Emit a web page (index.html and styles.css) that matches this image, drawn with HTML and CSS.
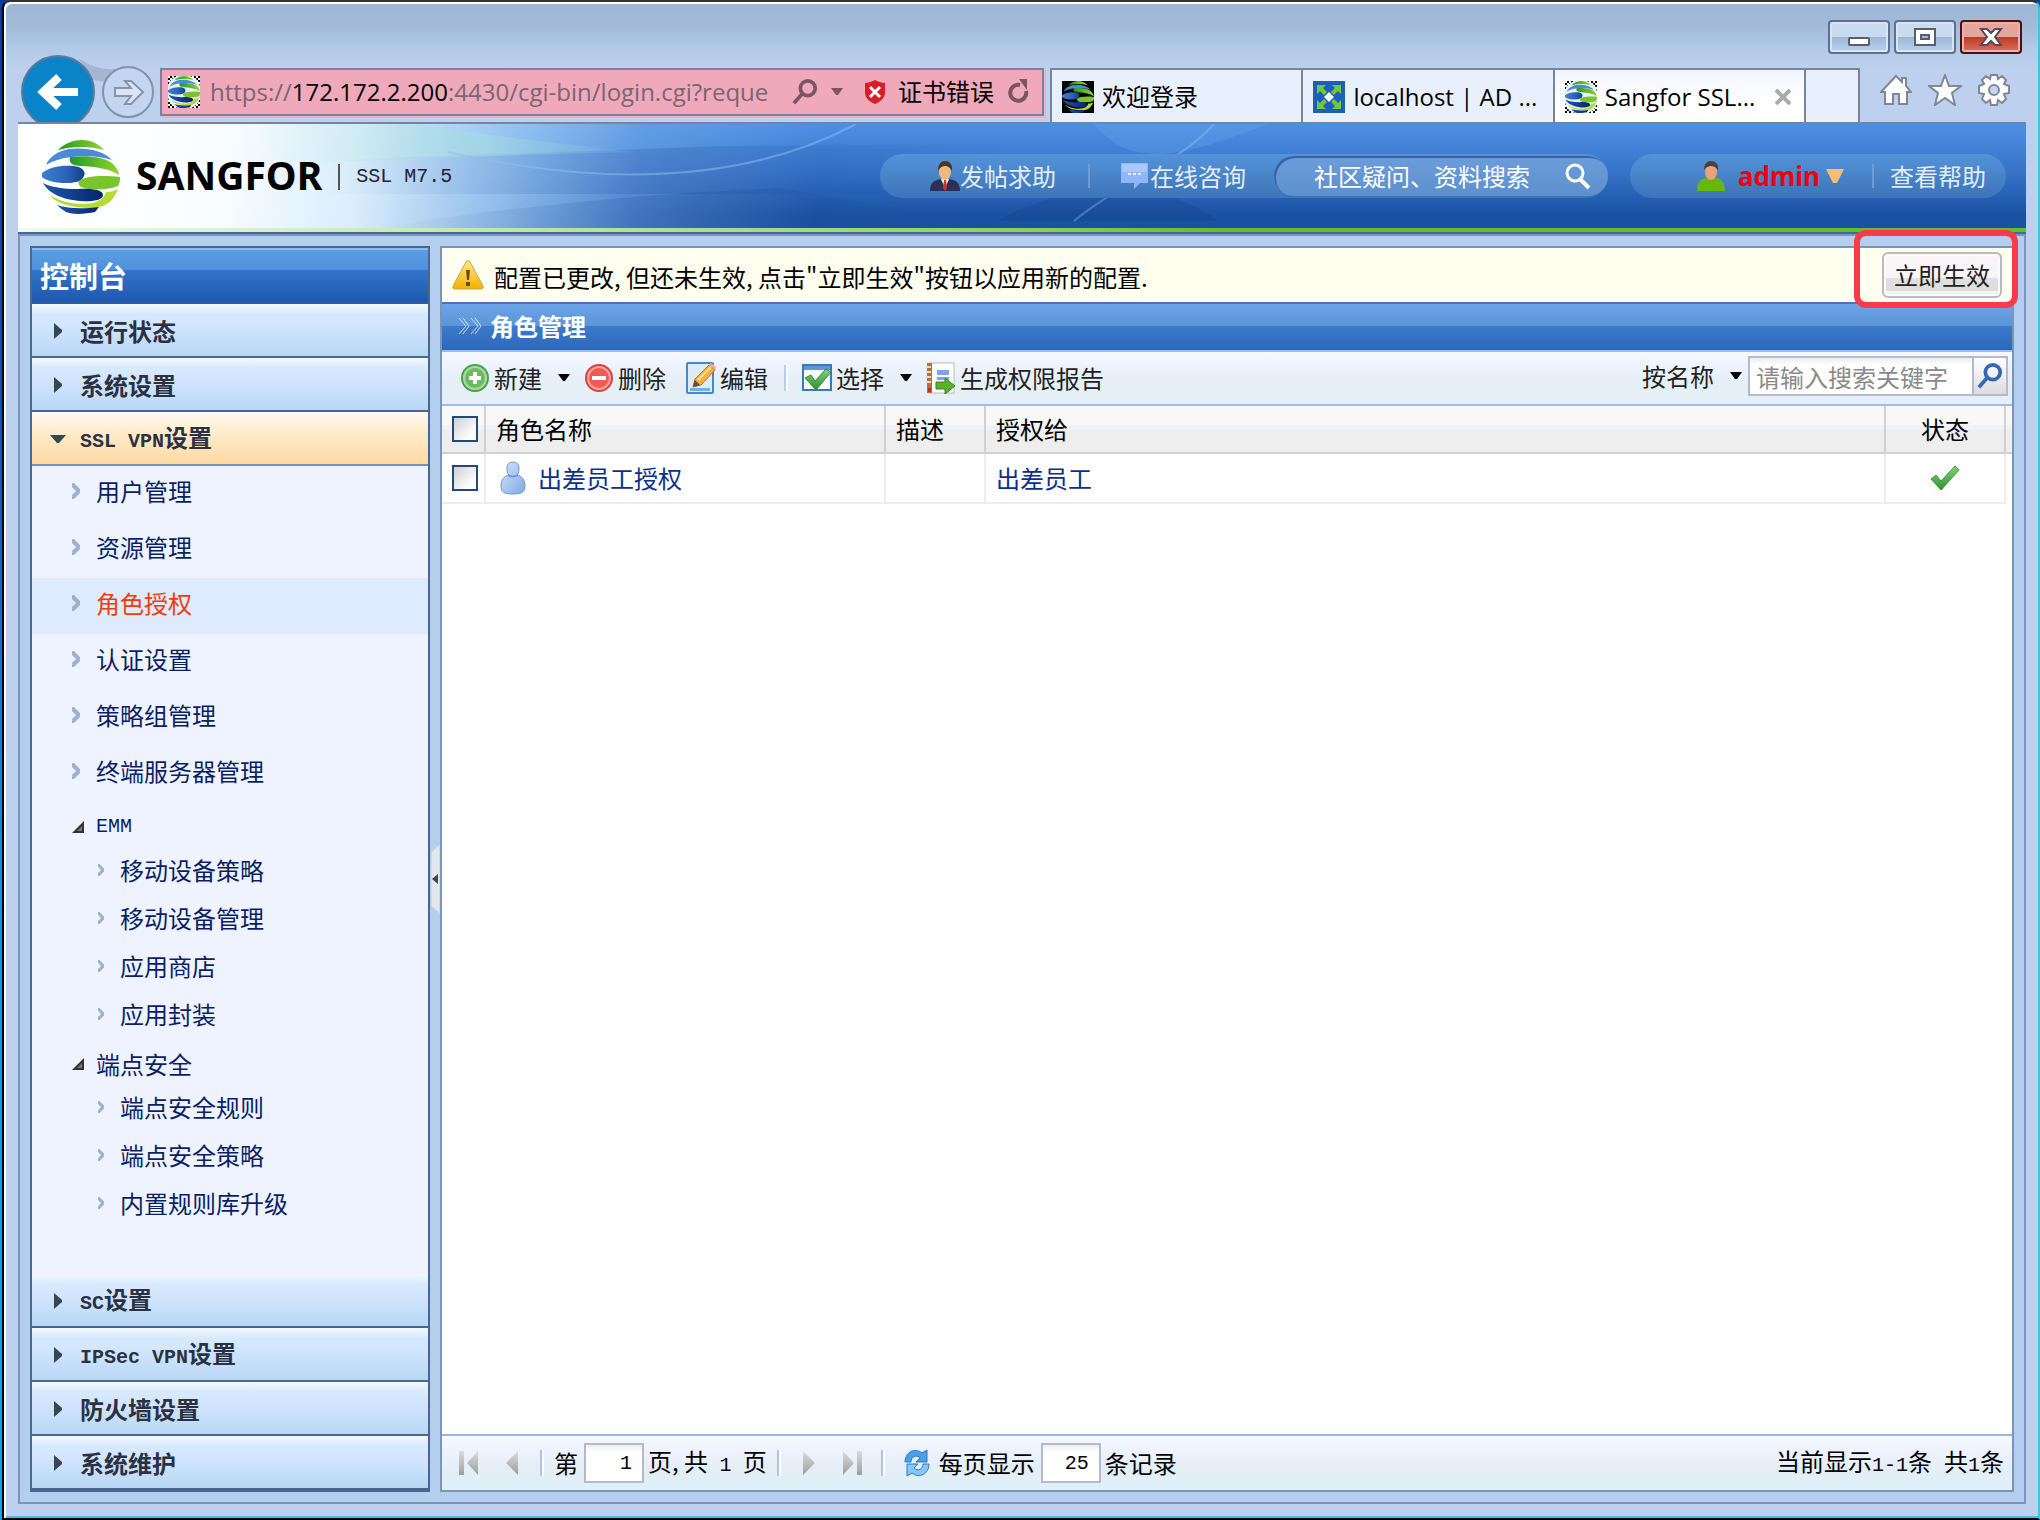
FILE: index.html
```html
<!DOCTYPE html>
<html lang="zh-CN">
<head>
<meta charset="utf-8">
<title>Sangfor SSL VPN</title>
<link rel="stylesheet" href="styles.css">
</head>
<body>
<svg class="defs" aria-hidden="true">
  <defs>
    <linearGradient id="gBlue" x1="0" y1="0" x2="1" y2="0"><stop offset="0" stop-color="#3f7fd0"/><stop offset=".6" stop-color="#2a62b4"/><stop offset="1" stop-color="#123f8c"/></linearGradient>
    <linearGradient id="gNavy" x1="0" y1="0" x2="1" y2="0"><stop offset="0" stop-color="#1f57ab"/><stop offset="1" stop-color="#06256a"/></linearGradient>
    <linearGradient id="gGreen" x1="0" y1="0" x2="1" y2="0"><stop offset="0" stop-color="#1c9a2c"/><stop offset="1" stop-color="#96d22c"/></linearGradient>
    <linearGradient id="gGrey" x1="0" y1="0" x2="0" y2="1"><stop offset="0" stop-color="#dcdcdc"/><stop offset="1" stop-color="#9c9ea2"/></linearGradient>
    <linearGradient id="gWarn" x1="0" y1="0" x2="0" y2="1"><stop offset="0" stop-color="#ffe98a"/><stop offset="1" stop-color="#f3b000"/></linearGradient>
    <linearGradient id="gUser" x1="0" y1="0" x2="1" y2="1"><stop offset="0" stop-color="#d6e6fb"/><stop offset="1" stop-color="#7ea9e6"/></linearGradient>
    <linearGradient id="gCheck" x1="0" y1="0" x2="0" y2="1"><stop offset="0" stop-color="#86d07c"/><stop offset="1" stop-color="#2f9230"/></linearGradient>
    <linearGradient id="gTeal" x1="0" y1="0" x2="1" y2="0"><stop offset="0" stop-color="#a5e0d8" stop-opacity="0"/><stop offset=".6" stop-color="#a5e0d8" stop-opacity=".5"/><stop offset="1" stop-color="#7cb8e8" stop-opacity=".2"/></linearGradient>
    <linearGradient id="gDeep" x1="0" y1="0" x2="1" y2="0"><stop offset="0" stop-color="#123f8c" stop-opacity="0"/><stop offset=".5" stop-color="#123f8c" stop-opacity=".2"/><stop offset="1" stop-color="#123f8c" stop-opacity="0"/></linearGradient>
    <symbol id="globe" viewBox="0 0 78 74">
      <path d="M16 10C23 3 32 0 40 0c9 0 17 4 22 10C48 6 30 6 16 10z" fill="url(#gGreen)"/>
      <path d="M4 25C7 17 16 11 27 9c15-2 34 1 43 11-13-4-28-5-40-3-10 1-20 4-26 8z" fill="#4a8ad8"/>
      <path d="M28 17c18-2 34 0 42 6 4 4 7 8 7 12-9-6-21-8-36-9-9 0-15-2-13-9z" fill="url(#gGreen)"/>
      <path d="M0 33c8-6 18-8 32-7 8 1 12 5 10 10-2 5-8 7-17 7-11 0-20-2-25-6z" fill="url(#gBlue)"/>
      <path d="M37 41c6-5 22-6 41-4 0 3 0 6-2 9-7 3-18 4-29 3-8-1-12-4-10-8z" fill="#79c52b"/>
      <path d="M1 43c8 4 20 6 34 6 16-1 26 1 26 6 0 5-10 7-22 6C21 60 6 53 1 43z" fill="url(#gNavy)"/>
      <path d="M64 52c5 0 9-1 12-3-3 8-8 14-15 17-10 3-22 2-32 0C18 64 10 59 8 55c9 6 21 9 33 9 12 0 21-4 23-12z" fill="#b5da33"/>
      <path d="M15 65c12 4 26 4 42 2l-4 5c-9 2-22 3-29 0-3-2-6-4-9-7z" fill="url(#gNavy)"/>
    </symbol>
    <symbol id="caret" viewBox="0 0 12 8"><path d="M0 0h12L7 7H5z" fill="currentColor"/></symbol>
    <symbol id="tri" viewBox="0 0 8 16"><path d="M0 0l8 7v2l-8 7z" fill="currentColor"/></symbol>
    <symbol id="chev" viewBox="0 0 8 16"><path d="M0 0h2l6 6v4l-6 6H0v-4l4-4-4-4z" fill="currentColor"/></symbol>
    <symbol id="fold" viewBox="0 0 12 12"><path d="M12 0v12H0z" fill="#333"/><path d="M10 5v5H5z" fill="#777"/></symbol>
    <symbol id="lens" viewBox="0 0 28 28"><circle cx="17" cy="10" r="8" fill="none" stroke="currentColor" stroke-width="4"/><path d="M11 16L2 26" stroke="currentColor" stroke-width="4"/></symbol>
    <symbol id="next" viewBox="0 0 12 24"><path d="M0 0l12 12L0 24z" fill="url(#gGrey)"/></symbol>
    <symbol id="last" viewBox="0 0 20 24"><path d="M0 0l11 12L0 24z" fill="url(#gGrey)"/><path d="M14 0h5v24h-5z" fill="url(#gGrey)"/></symbol>
  </defs>
</svg>

<div class="desktop">
<div class="window">
  <div class="titlebar">
    <button class="winbtn" aria-label="最小化"><svg width="24" height="24" viewBox="0 0 24 24"><rect x="2" y="13" width="20" height="7" rx="1" fill="#fff" stroke="#555f70" stroke-width="2"/></svg></button>
    <button class="winbtn" aria-label="最大化"><svg width="24" height="24" viewBox="0 0 24 24"><path d="M2 4h20v16H2z" fill="#fff" stroke="#555f70" stroke-width="2"/><path d="M8 10h8v4H8z" fill="#9fb9d8" stroke="#555f70" stroke-width="2"/></svg></button>
    <button class="winbtn close" aria-label="关闭"><svg width="24" height="24" viewBox="0 0 24 24"><path d="M2 4h6l4 4 4-4h6l-6 8 6 8h-6l-4-4-4 4H2l6-8z" fill="#fff" stroke="#5a4a55" stroke-width="2"/></svg></button>
  </div>

  <div class="navbar">
    <div class="history">
      <svg width="142" height="68" viewBox="0 0 142 68">
        <path d="M60 4c12 8 24 12 38 11L88 28 74 26z" fill="#a3b6d2"/>
        <circle cx="40" cy="38" r="36" fill="#0a84c8" stroke="#5d7a98" stroke-width="2"/>
        <path d="M60 38H28M41 23L25 38l16 15" fill="none" stroke="#fff" stroke-width="8"/>
        <circle cx="110" cy="38" r="25" fill="#c3d5f0" stroke="#8392a8" stroke-width="2"/>
        <path d="M97 34h16l-6-7h6l12 11-12 12h-6l6-8H97z" fill="#d9e5f6" stroke="#8794a8" stroke-width="2"/>
      </svg>
    </div>
    <div class="address">
      <span class="favicon checker"><svg width="32" height="32" viewBox="0 0 78 74" preserveAspectRatio="none"><use href="#globe" width="78" height="74"/></svg></span>
      <span class="url">https://<b>172.172.2.200</b>:4430/cgi-bin/login.cgi?reque</span>
      <svg class="dim" width="26" height="26"><use href="#lens"/></svg>
      <svg class="dim addr-caret" width="14" height="8"><use href="#caret"/></svg>
      <svg width="22" height="24" viewBox="0 0 22 24"><path d="M11 0c4 2 7 3 10 3v10c0 5-5 9-10 11C6 22 1 18 1 13V3c3 0 6-1 10-3z" fill="#d81f26"/><path d="M6 7l10 10M16 7L6 17" stroke="#fff" stroke-width="3"/></svg>
      <span class="cert">证书错误</span>
      <svg class="dim" width="22" height="26" viewBox="0 0 22 26"><path d="M18 12a8 8 0 1 1-6-6" fill="none" stroke="currentColor" stroke-width="4"/><path d="M11 0h8v11z" fill="currentColor"/></svg>
    </div>
    <div class="tabs">
      <div class="tab"><span class="favicon dark"><svg width="32" height="32" viewBox="0 0 78 74" preserveAspectRatio="none"><use href="#globe" width="78" height="74"/></svg></span><span>欢迎登录</span></div>
      <div class="tab"><span class="favicon"><svg width="32" height="32" viewBox="0 0 32 32"><rect width="32" height="32" fill="#1c5fb8"/><g fill="#74c63a"><path d="M4 4h9l-3 3 4 4-3 3-4-4-3 3zM28 4v9l-3-3-4 4-3-3 4-4-3-3zM4 28v-9l3 3 4-4 3 3-4 4 3 3zM28 28h-9l3-3-4-4 3-3 4 4 3-3z"/></g><path d="M16 11l5 5-5 5-5-5z" fill="#fff"/></svg></span><span>localhost | AD ...</span></div>
      <div class="tab active"><span class="favicon checker"><svg width="32" height="32" viewBox="0 0 78 74" preserveAspectRatio="none"><use href="#globe" width="78" height="74"/></svg></span><span class="tabname">Sangfor SSL...</span><svg width="18" height="16" viewBox="0 0 18 16"><path d="M2 1l14 14M16 1L2 15" stroke="#aaa" stroke-width="4"/></svg></div>
      <div class="tab blank"></div>
    </div>
    <div class="tools">
      <svg width="32" height="32" viewBox="0 0 32 32"><path d="M16 2l6 6V4h4v8l5 6h-4v12h-8V20h-6v10H5V18H1z" fill="#fff" stroke="#7d8796" stroke-width="2"/></svg>
      <svg width="34" height="32" viewBox="0 0 34 32"><path d="M17 1l4 11h12l-9 7 3 12-10-7-10 7 3-12-9-7h12z" fill="#fff" stroke="#7d8796" stroke-width="2"/></svg>
      <svg width="32" height="32" viewBox="0 0 32 32"><path d="M13 1h6l1 4 4-3 4 4-2 4 5 2v7l-5 1 2 5-4 4-4-3-1 5h-6l-1-5-4 3-4-4 2-5-5-1v-7l5-2-2-4 4-4 4 3z" fill="#fff" stroke="#7d8796" stroke-width="2"/><circle cx="16" cy="16" r="5" fill="#c3d5f0" stroke="#7d8796" stroke-width="2"/></svg>
    </div>
  </div>

  <header class="banner">
    <svg class="swoosh" viewBox="0 0 2008 104" preserveAspectRatio="none" aria-hidden="true">
      <path d="M360 104C480 84 620 70 760 64L1000 104z" fill="url(#gDeep)"/>
      <path d="M300 38C420 30 520 30 700 22L1000 20V70H300z" fill="url(#gDeep)"/>
      <path d="M240 0h160C460 10 540 20 620 28 500 30 380 36 260 40z" fill="url(#gTeal)"/>
      <path d="M430 28Q680 84 838 0" fill="none" stroke="#8cc0f4" stroke-width="2" opacity=".5"/>
      <path d="M1056 97C1100 60 1160 40 1196 0" fill="none" stroke="#8cc0f4" stroke-width="2" opacity=".5"/>
      <path d="M980 97C1040 60 1140 50 1200 97z" fill="#0d357c" opacity=".2"/>
      <path d="M1076 0C1110 40 1150 40 1250 0z" fill="#6eb0f8" opacity=".25"/>
    </svg>
    <div class="brand">
      <svg width="78" height="74"><use href="#globe"/></svg>
      <strong>SANGFOR</strong><i></i><span class="mono">SSL M7.5</span>
    </div>
    <div class="pill left">
      <a href="#"><svg width="30" height="30" viewBox="0 0 30 30"><path d="M0 30c0-9 5-11 11-12h8c6 1 11 3 11 12z" fill="#2c2f58"/><path d="M11 18h8l-4 9z" fill="#fff"/><path d="M14 19h2l1 8-2 3-2-3z" fill="#d0342c"/><ellipse cx="15" cy="11" rx="6" ry="8" fill="#f0b880"/><path d="M8 10c0-7 3-10 7-10s8 3 7 10c-2-4-5-5-7-5s-5 1-7 5z" fill="#4a3428"/></svg>发帖求助</a>
      <i></i>
      <a href="#"><svg width="30" height="28" viewBox="0 0 30 28"><path d="M1 1h27v20h-8l-6 6v-6H1z" fill="#8fb6f8"/><path d="M2 2h25v8H2z" fill="#a9c9fc"/><path d="M8 12h3m2 0h3m2 0h3" stroke="#e8f0ff" stroke-width="2"/></svg>在线咨询</a>
      <a href="#" class="search-pill">社区疑问、资料搜索<svg width="28" height="28" viewBox="0 0 28 28"><circle cx="11" cy="11" r="8" fill="none" stroke="#fff" stroke-width="3"/><path d="M16 17l9 9" stroke="#fff" stroke-width="4"/></svg></a>
    </div>
    <div class="pill right">
      <a href="#" class="admin"><svg width="30" height="30" viewBox="0 0 30 30"><path d="M1 30c0-9 4-13 10-13h8c6 0 10 4 10 13z" fill="#68b80c"/><ellipse cx="15" cy="11" rx="6" ry="8" fill="#eaa27a"/><path d="M8 9c0-6 3-9 7-9s8 3 7 9c-2-3-5-4-7-4s-5 1-7 4z" fill="#4d4038"/></svg><b>admin</b><svg width="18" height="14" viewBox="0 0 18 14"><path d="M0 0h18L11 14H7z" fill="#f7bd77"/></svg></a>
      <i></i>
      <a href="#">查看帮助</a>
    </div>
  </header>

  <div class="workspace">
    <nav class="sidebar">
      <h2>控制台</h2>
      <button class="group"><svg width="8" height="16"><use href="#tri"/></svg>运行状态</button>
      <button class="group"><svg width="8" height="16"><use href="#tri"/></svg>系统设置</button>
      <button class="group open"><svg class="down" width="16" height="8" viewBox="0 0 16 8"><path d="M0 0h16L9 8H7z" fill="currentColor"/></svg><span><span class="mono">SSL VPN</span>设置</span></button>
      <div class="submenu">
        <a href="#"><svg width="8" height="16"><use href="#chev"/></svg>用户管理</a>
        <a href="#"><svg width="8" height="16"><use href="#chev"/></svg>资源管理</a>
        <a href="#" class="current"><svg width="8" height="16"><use href="#chev"/></svg>角色授权</a>
        <a href="#"><svg width="8" height="16"><use href="#chev"/></svg>认证设置</a>
        <a href="#"><svg width="8" height="16"><use href="#chev"/></svg>策略组管理</a>
        <a href="#"><svg width="8" height="16"><use href="#chev"/></svg>终端服务器管理</a>
        <a href="#" class="branch"><svg width="12" height="12"><use href="#fold"/></svg><span class="mono">EMM</span></a>
        <a href="#" class="leaf"><svg width="6" height="12"><use href="#chev"/></svg>移动设备策略</a>
        <a href="#" class="leaf"><svg width="6" height="12"><use href="#chev"/></svg>移动设备管理</a>
        <a href="#" class="leaf"><svg width="6" height="12"><use href="#chev"/></svg>应用商店</a>
        <a href="#" class="leaf"><svg width="6" height="12"><use href="#chev"/></svg>应用封装</a>
        <a href="#" class="branch"><svg width="12" height="12"><use href="#fold"/></svg>端点安全</a>
        <a href="#" class="leaf"><svg width="6" height="12"><use href="#chev"/></svg>端点安全规则</a>
        <a href="#" class="leaf"><svg width="6" height="12"><use href="#chev"/></svg>端点安全策略</a>
        <a href="#" class="leaf"><svg width="6" height="12"><use href="#chev"/></svg>内置规则库升级</a>
      </div>
      <button class="group"><svg width="8" height="16"><use href="#tri"/></svg><span><span class="mono">SC</span>设置</span></button>
      <button class="group"><svg width="8" height="16"><use href="#tri"/></svg><span><span class="mono">IPSec VPN</span>设置</span></button>
      <button class="group"><svg width="8" height="16"><use href="#tri"/></svg>防火墙设置</button>
      <button class="group"><svg width="8" height="16"><use href="#tri"/></svg>系统维护</button>
    </nav>

    <div class="splitter"><button aria-label="收起"><svg width="10" height="70" viewBox="0 0 10 70"><path d="M10 0v70L1 62V8z" fill="#e3e7ec" stroke="#c3ccd8"/><path d="M8 30v10l-6-5z" fill="#444"/></svg></button></div>

    <main class="panel">
      <div class="notice">
        <svg width="32" height="30" viewBox="0 0 32 30"><path d="M14 2q2-3 4 0l13 24q1 3-2 3H3q-3 0-2-3z" fill="url(#gWarn)" stroke="#cfa24a" stroke-width="1"/><path d="M14 10h4l-1 10h-2zM14 22h4v4h-4z" fill="#6b4a10"/></svg>
        <span class="message">配置已更改, 但还未生效, 点击"立即生效"按钮以应用新的配置.</span>
        <div class="apply"><button>立即生效</button></div>
      </div>
      <h1><svg width="24" height="18" viewBox="0 0 24 18"><path d="M1 1l7 8-7 8M5 1l6 8-6 8M13 1l7 8-7 8M17 1l6 8-6 8" fill="none" stroke="#cfe2fa" stroke-width="1"/></svg>角色管理</h1>
      <div class="toolbar">
        <button class="first"><svg width="30" height="30" viewBox="0 0 30 30"><circle cx="15" cy="15" r="13" fill="#6cba62" stroke="#4f9e4c" stroke-width="2"/><circle cx="15" cy="15" r="11" fill="none" stroke="#a7dba0" stroke-width="2"/><path d="M15 9v12M9 15h12" stroke="#fff" stroke-width="4"/></svg>新建<svg class="drop" width="12" height="8"><use href="#caret"/></svg></button>
        <button><svg width="30" height="30" viewBox="0 0 30 30"><circle cx="15" cy="15" r="13" fill="#ee5b56" stroke="#d4453f" stroke-width="2"/><circle cx="15" cy="15" r="11" fill="none" stroke="#f8a19c" stroke-width="2"/><path d="M8 15h14" stroke="#fff" stroke-width="4"/></svg>删除</button>
        <button><svg width="30" height="32" viewBox="0 0 30 32"><rect x="1" y="1" width="26" height="30" rx="1" fill="#dcecfc" stroke="#4a86c8" stroke-width="2"/><path d="M4 26h20v3H4z" fill="#6cb2ee"/><path d="M7 25l2-8L23 3l6 5-14 15z" fill="#f5b040" stroke="#b8742a" stroke-width="1"/><path d="M12 18L25 5" stroke="#fbdc90" stroke-width="2"/><path d="M7 25l2-7 5 5z" fill="#6e4a2a"/><path d="M23 3l2-2 5 4-1 3z" fill="#f3a7a0"/></svg>编辑</button>
        <i></i>
        <button class="choose"><svg width="30" height="28" viewBox="0 0 30 28"><rect x="1" y="1" width="28" height="25" fill="#fff" stroke="#3f78b8" stroke-width="2"/><path d="M2 2h26v4H2z" fill="#5e96d6"/><path d="M3 14l6-3 4 6L24 5l5 3-15 18z" fill="url(#gCheck)" stroke="#2f8a34"/></svg>选择<svg class="drop" width="12" height="8"><use href="#caret"/></svg></button>
        <button><svg width="30" height="32" viewBox="0 0 30 32"><rect x="4" y="1" width="24" height="30" fill="#fff" stroke="#b8b8b8"/><path d="M1 1h5v30H1z" fill="#b8703a"/><path d="M0 5h5M0 10h5M0 15h5M0 20h5" stroke="#f0dcc0" stroke-width="2"/><path d="M11 8h12v5H11zM11 15h12v3H11z" fill="#7ba4ec"/><path d="M10 20h9v-4l10 8-10 8v-5h-9z" fill="#5bb030" stroke="#3b7d1c"/><path d="M2 26h3v4H2z" fill="#e02020"/></svg>生成权限报告</button>
        <div class="finder">
          <button>按名称<svg class="drop" width="12" height="8"><use href="#caret"/></svg></button>
          <input type="text" aria-label="搜索" placeholder="请输入搜索关键字"><button class="go" aria-label="查找"><svg width="26" height="26"><use href="#lens"/></svg></button>
        </div>
      </div>
      <table>
        <colgroup><col class="c-check"><col class="c-name"><col class="c-desc"><col><col class="c-state"><col class="c-end"></colgroup>
        <thead><tr><th><input type="checkbox" aria-label="全选"></th><th>角色名称</th><th>描述</th><th>授权给</th><th class="mid">状态</th><th></th></tr></thead>
        <tbody><tr><td><input type="checkbox" aria-label="选择出差员工授权"></td><td><a href="#" class="role"><svg width="26" height="34" viewBox="0 0 26 34"><path d="M7 6c0-3 3-5 6-5s6 2 6 5c0 4 0 6-2 8 5 1 8 5 8 11 0 6-3 8-12 8S1 31 1 25c0-6 3-10 8-11-2-2-2-4-2-8z" fill="url(#gUser)" stroke="#6f98d4"/><path d="M8 14q5 3 10 0" fill="none" stroke="#6f98d4" stroke-width="2"/></svg>出差员工授权</a></td><td></td><td><a href="#">出差员工</a></td><td class="mid"><svg width="30" height="26" viewBox="0 0 30 26"><path d="M1 14l5-4 5 6L25 1l4 4-18 20z" fill="url(#gCheck)" stroke="#3c9a3c"/></svg></td><td></td></tr></tbody>
      </table>
      <footer class="pager">
        <button aria-label="首页"><svg class="flip" width="20" height="24"><use href="#last"/></svg></button>
        <button class="prev" aria-label="上一页"><svg class="flip" width="12" height="24"><use href="#next"/></svg></button>
        <i></i>
        <label class="page">第<input type="text" value="1"></label>
        <span class="count">页, 共 <span class="mono">1</span> 页</span>
        <i></i>
        <button class="next" aria-label="下一页"><svg width="12" height="24"><use href="#next"/></svg></button>
        <button class="end" aria-label="末页"><svg width="20" height="24"><use href="#last"/></svg></button>
        <i></i>
        <button class="reload" aria-label="刷新"><svg width="28" height="28" viewBox="0 0 28 28"><path d="M2 13C2 3 12-2 19 4l5-3v12H13l4-4C13 5 8 8 8 13z" fill="#4a9fe8" stroke="#2a78c4"/><path d="M26 15c0 10-10 15-17 9l-5 3V15h11l-4 4c4 4 9 1 9-4z" fill="#86c6f6" stroke="#2a78c4"/></svg></button>
        <label>每页显示<input type="text" value="25">条记录</label>
        <span class="total">当前显示<span class="mono">1-1</span>条<span class="mono">&nbsp;</span>共<span class="mono">1</span>条</span>
      </footer>
    </main>
  </div>
</div>
</div>
</body>
</html>
```
FILE: styles.css
```css
* { box-sizing: border-box; }
body {
  margin: 0;
  font-family: "Noto Sans CJK SC", sans-serif;
  font-size: 24px;
  line-height: 32px;
  color: #000;
}
button, input { font: inherit; color: inherit; margin: 0; }
button { background: none; border: 0; padding: 0; }
a { color: inherit; text-decoration: none; }
svg { display: block; flex: none; }
.defs { position: absolute; width: 0; height: 0; }
.mono { font-family: "Liberation Mono", monospace; font-size: 20px; }

/* browser window */
.desktop {
  min-height: 100vh;
  display: flex;
  padding-left: 2px;
  background: linear-gradient(#0a3c9c, #0a4fc0 25%, #0a96f0 60%, #0aa6f8);
}
.window {
  flex: 1;
  min-width: 0;
  display: flex;
  flex-direction: column;
  padding: 2px 12px 14px 14px;
  border: 2px solid #000;
  border-top-color: #333;
  border-right-color: #3cc4e0;
  border-radius: 8px 8px 0 0;
  background: linear-gradient(#9db6d4, #a3bad8 24px, #b2cbe8 48px, #bdd1ee 66px);
  box-shadow: inset 2px 2px 0 #fff, inset 0 -2px 0 #3cc4e0;
}
.titlebar {
  height: 64px;
  padding: 16px 4px 0 0;
  display: flex;
  justify-content: flex-end;
  gap: 4px;
}
.winbtn {
  width: 62px;
  height: 34px;
  display: flex;
  align-items: center;
  justify-content: center;
  border: 2px solid #5d7190;
  border-radius: 4px;
  background: linear-gradient(#c9d9ee 50%, #9db7d6 50%, #b9d2ee);
  box-shadow: inset 0 0 0 2px #d8e5f5;
}
.winbtn.close {
  border-color: #4a1018;
  background: linear-gradient(#e5a59c 50%, #bd3a22 50%, #d8715e);
  box-shadow: inset 0 0 0 2px #eab2aa;
}

.navbar {
  display: flex;
  height: 56px;
  border-bottom: 2px solid #76859c;
  font-family: "Open Sans", "Noto Sans CJK SC", sans-serif;
}
.history { width: 142px; margin-top: -14px; }
.address {
  flex: 0 1 884px;
  height: 48px;
  display: flex;
  align-items: center;
  padding: 0 12px 0 6px;
  border: 2px solid #77839a;
  background: #f0a9bb;
  box-shadow: 2px 2px 0 #e8b2c8;
}
.favicon { flex: none; width: 32px; height: 32px; }
.checker { background: repeating-conic-gradient(#000 0 25%, #fff 0 50%) 0 0 / 4px 4px; }
.checker svg { background: #e8f2f4; border-radius: 12px; }
.dark { background: #000; }
.url { flex: 1; min-width: 0; margin: 0 8px 0 10px; overflow: hidden; white-space: nowrap; color: #7b6570; }
.url b { font-weight: 400; color: #000; }
.dim { color: #7b5563; }
.addr-caret { margin: 0 20px 0 12px; }
.cert { margin: 0 14px 0 12px; white-space: nowrap; }
.tabs { display: flex; flex: 0 1 810px; margin-left: 6px; border-left: 2px solid #76859c; }
.tab {
  flex: 0 1 252px;
  min-width: 0;
  height: 54px;
  display: flex;
  align-items: center;
  gap: 8px;
  padding: 2px 12px 0 10px;
  border-top: 2px solid #76859c;
  border-right: 2px solid #76859c;
  background: #e8f0fd;
  white-space: nowrap;
}
.tab.active { background: linear-gradient(#f2f5ff, #fff 60%); }
.tab.blank { flex-basis: 54px; padding: 0; }
.tabname { flex: 1; }
.tools { flex: 1; display: flex; justify-content: flex-end; gap: 16px; padding: 6px 16px 0 0; }

/* product header */
.banner {
  position: relative;
  height: 110px;
  display: flex;
  align-items: flex-start;
  padding: 30px 20px 0 24px;
  border-bottom: 2px solid #44689c;
  background:
    linear-gradient(90deg, #f0faea, #8cd060 50%, #6abb28 60%) 0 104px / 100% 4px no-repeat,
    linear-gradient(96deg, #fff, #fafdff 10%, #daeefc 17%, #a6d0f6d8 24%, #78acec80 31%, #5c9ce400 40%),
    linear-gradient(#4c90e2, #3672c8 45%, #1a52a2 85%);
  color: #e4ecf6;
}
.swoosh { position: absolute; left: 0; top: 0; width: 100%; height: 104px; }
.brand { position: relative; display: flex; align-items: center; flex: 1; margin-top: -14px; color: #000; }
.brand strong { margin-left: 16px; padding-bottom: 4px; font: 700 39px/48px "Noto Sans", sans-serif; }
.brand i { width: 2px; height: 26px; margin: 0 16px; background: #555; }
.brand .mono { color: #223; }
.pill {
  position: relative;
  height: 44px;
  display: flex;
  align-items: center;
  border-radius: 22px;
  background: linear-gradient(#5493d8, #3c74b8);
  white-space: nowrap;
}
.pill a { display: flex; align-items: center; }
.pill i { width: 2px; height: 24px; background: #6f9bd0; }
.pill.left { padding-left: 50px; margin-right: 22px; }
.pill.left i { margin: 0 30px 0 32px; }
.pill a.search-pill {
  height: 40px;
  margin-left: 28px;
  padding: 0 16px 0 40px;
  gap: 34px;
  border-radius: 20px;
  background: linear-gradient(#6c9cdc, #5c90cc);
  box-shadow: inset 2px 2px 0 #3565a8;
  color: #fff;
}
.pill.right { padding: 0 20px 0 66px; }
.pill.right i { margin: 0 16px 0 28px; }
.admin b { margin: 0 6px 0 12px; font: 700 26px/32px "Noto Sans", sans-serif; color: #f00010; }

/* work area */
.workspace {
  flex: 1;
  display: flex;
  padding: 10px;
  border: 2px solid #7a94bc;
  background: #b4cfee;
}
.sidebar {
  width: 400px;
  flex: none;
  display: flex;
  flex-direction: column;
  border: 2px solid #4a6690;
  background: #eef3ff;
}
.sidebar h2 {
  height: 56px;
  margin: 0;
  padding: 0 8px;
  border-bottom: 2px solid #2f5a9c;
  background: linear-gradient(#5c9ee4, #4f92da 40%, #3176cc 40%, #1d58ae);
  box-shadow: inset 0 2px 0 #8cbcf0;
  font-size: 29px;
  line-height: 54px;
  color: #fff;
}
.group {
  flex: none;
  height: 54px;
  display: flex;
  align-items: center;
  padding: 2px 22px 0;
  gap: 18px;
  border-bottom: 2px solid #4a6690;
  background: linear-gradient(#f4f9ff, #d6e9ff 20%, #cfe4fc 50%, #b8d7f5);
  font-weight: 700;
  color: #2a3142;
}
.group svg { color: #36474f; }
.group .mono { font-weight: 700; }
.group.open { padding-left: 18px; gap: 14px; border-color: #7a90b4; background: linear-gradient(#fffaf2, #ffedcf 35%, #ffd9a2); }
.submenu { flex: 1; display: flex; flex-direction: column; padding-bottom: 46px; color: #0a1f66; }
.submenu a { height: 56px; display: flex; align-items: center; gap: 16px; padding: 0 40px 6px 40px; }
.submenu svg { color: #9db2cf; }
.submenu .current { background: #deeafd; color: #f03c0c; }
.submenu .branch { height: 45px; gap: 12px; padding-top: 10px; }
.submenu .leaf { height: 48px; gap: 16px; padding-left: 66px; padding-bottom: 2px; }
.splitter { width: 10px; flex: none; display: flex; align-items: center; padding-top: 20px; }

.panel {
  flex: 1;
  min-width: 0;
  display: flex;
  flex-direction: column;
  border: 2px solid #7a94bc;
  background: #fff;
}
.notice {
  height: 56px;
  display: flex;
  align-items: center;
  gap: 10px;
  padding-left: 10px;
  border-bottom: 2px solid #4a72b4;
  background: #fffff0;
}
.message { padding-top: 4px; }
.apply {
  position: relative;
  margin-left: auto;
  padding-right: 10px;
}
/* callout ring around the apply button */
.apply::after {
  content: "";
  position: absolute;
  inset: -22px -6px -10px -28px;
  border: 6px solid #f93a48;
  border-radius: 12px;
  pointer-events: none;
}
.apply button {
  display: block;
  width: 120px;
  height: 46px;
  border: 2px solid #bbb;
  border-radius: 6px;
  background: linear-gradient(#f8f4f8 58%, #e0e0e0 58%, #dcdcdc 88%, #f4f4f4 88%);
  box-shadow: inset 0 0 0 2px #fbfbfb;
  color: #222;
}
.panel h1 {
  height: 48px;
  display: flex;
  align-items: center;
  gap: 8px;
  margin: 0;
  padding: 0 16px 2px;
  border-bottom: 2px solid #9cbcec;
  background: linear-gradient(#6ca4e8, #5a96d8 48%, #3e7aca 48%, #2c68ba);
  font-size: 24px;
  color: #fff;
}
.toolbar {
  height: 54px;
  display: flex;
  align-items: center;
  padding: 0 4px 0 18px;
  border-bottom: 2px solid #9cbcec;
  background: linear-gradient(#f8f9ff, #edf2ff 30%, #e4eff6 60%, #e6eff7);
  color: #222;
  white-space: nowrap;
}
.toolbar button { display: flex; align-items: center; gap: 4px; margin-right: 20px; }
.toolbar .first { margin-right: 14px; }
.toolbar .drop { margin-left: 12px; color: #000; }
.toolbar > i { width: 4px; height: 26px; margin-right: 14px; margin-left: -4px; border-left: 2px solid #b4cdf0; border-right: 2px solid #fff; }
.toolbar .choose { margin-right: 14px; }
.finder { margin-left: auto; display: flex; align-items: center; align-self: flex-start; padding-top: 4px; }
.toolbar .finder button { margin-right: 6px; }
.finder input {
  width: 226px;
  height: 40px;
  padding: 0 6px;
  border: 2px solid #b4b9d0;
  background: linear-gradient(#eee, #fff 20%);
}
.finder input::placeholder { color: #8a8a8a; opacity: 1; }
.toolbar .finder .go { width: 34px; height: 40px; margin: 0; justify-content: center; border: 2px solid #b4b9d0; border-left: 0; background: linear-gradient(#fff, #dcdce0); color: #3568b4; }

table { width: 100%; table-layout: fixed; border-collapse: separate; border-spacing: 0; }
.c-check { width: 44px; }
.c-name { width: 400px; }
.c-desc { width: 100px; }
.c-state { width: 120px; }
.c-end { width: 6px; }
th, td { padding: 0 10px; text-align: left; font-weight: 400; border-right: 2px solid #eee; }
th {
  height: 48px;
  border-right-color: #d0d0d0;
  border-bottom: 2px solid #d0d0d4;
  background: linear-gradient(#f8f8f8 42%, #edf2fd 42%, #edf2fd 52%, #eee 52%);
}
td { height: 50px; border-bottom: 2px solid #eee; color: #0a2f8c; }
th:last-child, td:last-child { padding: 0; border-right: 0; }
td:last-child { border-bottom: 0; }
th.mid, td.mid { text-align: center; }
td.mid svg { margin: 0 auto; }
input[type="checkbox"] {
  display: block;
  appearance: none;
  width: 26px;
  height: 26px;
  border: 2px solid #1f4a7a;
  background: linear-gradient(135deg, #d0d0d0, #fff 80%);
}
.role { display: flex; align-items: center; gap: 12px; padding-left: 4px; }

.pager {
  height: 56px;
  margin-top: auto;
  display: flex;
  align-items: center;
  padding: 0 8px 0 16px;
  border-top: 2px solid #9cb6e2;
  background: linear-gradient(#f8f9ff, #edf2ff 30%, #e4eef5 60%, #def0fa);
  white-space: nowrap;
}
.pager > i { width: 4px; height: 26px; border-left: 2px solid #aac6f0; border-right: 2px solid #fff; }
.flip { transform: scaleX(-1); }
.pager label { display: flex; align-items: center; }
.pager input {
  width: 60px;
  height: 40px;
  margin: 0 4px 0 6px;
  padding: 0 10px;
  border: 2px solid #b4b9d0;
  background: linear-gradient(#eee, #fff 20%);
  font-family: "Liberation Mono", monospace;
  font-size: 20px;
  text-align: right;
}
.prev { margin: 0 22px 0 28px; }
.page { margin-left: 10px; }
.count { margin-right: 10px; }
.count .mono { margin: 0 6px; }
.next { margin: 0 28px 0 22px; }
.end { margin-right: 18px; }
.reload { margin: 0 8px 0 18px; }
.total { margin-left: auto; }
```
